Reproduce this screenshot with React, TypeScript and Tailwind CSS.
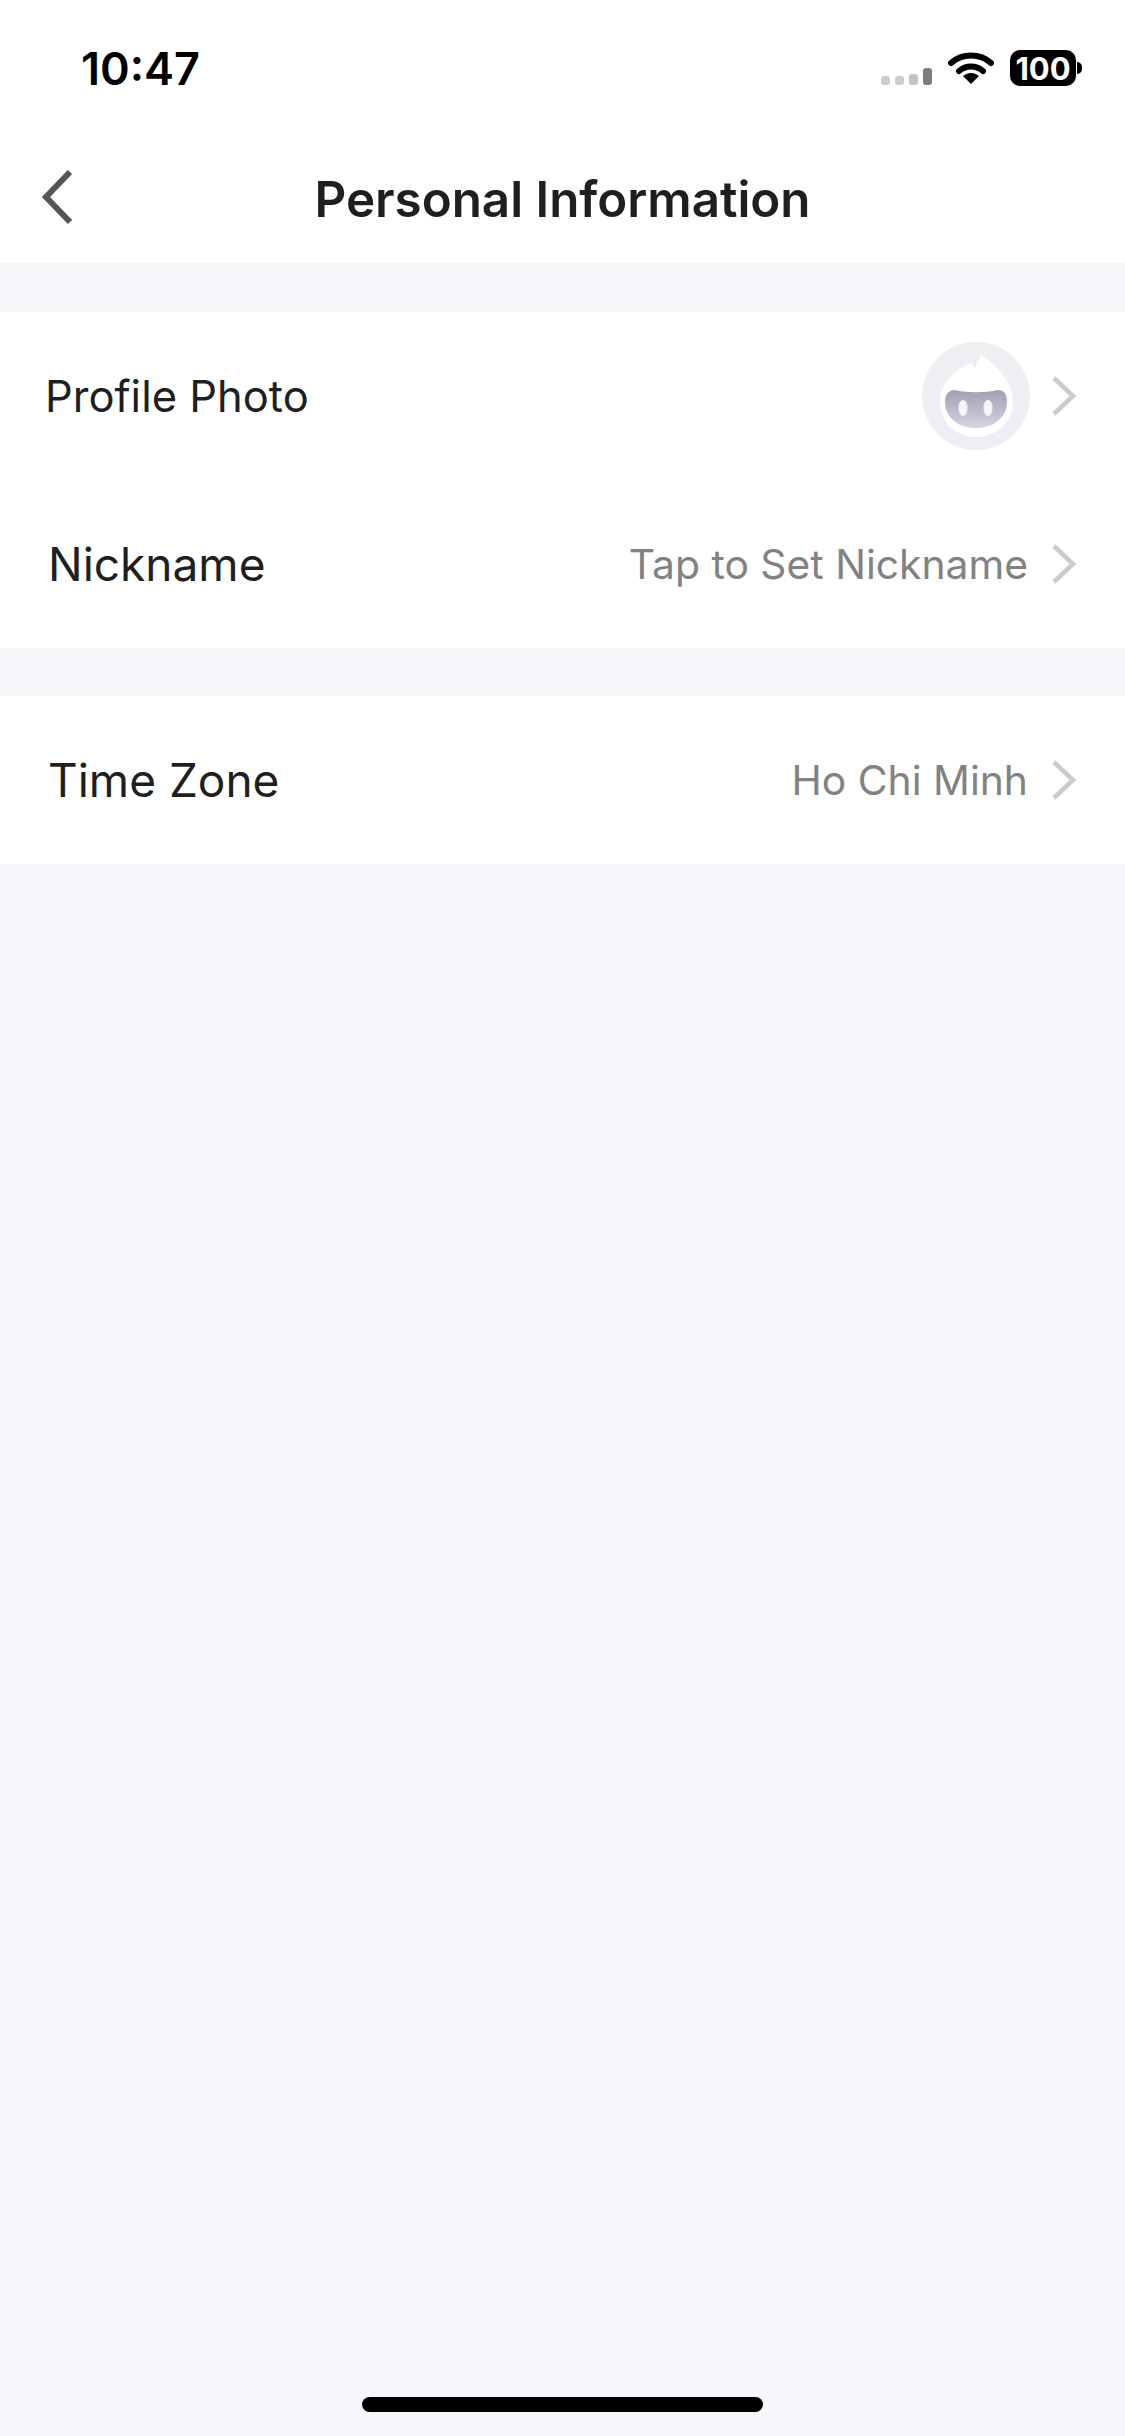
import React from 'react';

const font = { fontFamily: '"Inter", "Noto Sans", sans-serif' };

const Chevron = () => (
  <svg width="26" height="42" viewBox="0 0 26 42" fill="none" className="shrink-0">
    <path d="M3 3 L22 21 L3 39" stroke="#cbcbcb" strokeWidth="4.5" />
  </svg>
);

// 状态栏
const StatusBar = () => (
  <div className="h-[112px] flex items-center justify-between pl-[81px] pr-[49px] pt-[24px]">
    <span className="text-[45px] font-semibold text-black leading-none">10:47</span>
    <div className="flex items-center">
      <svg width="52" height="20" viewBox="0 0 52 20" className="mr-[15px] mt-[20px]">
        <rect x="0" y="8" width="9" height="9" rx="3" fill="#cdcdcd" />
        <rect x="14" y="8" width="9" height="9" rx="3" fill="#cdcdcd" />
        <rect x="28" y="6" width="9" height="11" rx="3" fill="#c4c4c4" />
        <rect x="42" y="0" width="9" height="17" rx="3" fill="#7d7d7d" />
      </svg>
      <svg width="46" height="34" viewBox="0 0 46 34" className="mr-[16px]">
        <path d="M3 12 C14 2 32 2 43 12" stroke="#000" strokeWidth="6" fill="none" strokeLinecap="round" />
        <path d="M11 20 C18 14 28 14 35 20" stroke="#000" strokeWidth="6" fill="none" strokeLinecap="round" />
        <path d="M15 25 C20 21 26 21 31 25 L23 33 Z" fill="#000" />
      </svg>
      <div className="relative w-[66px] h-[36px] rounded-[10px] bg-black flex items-center justify-center">
        <span className="text-[31px] font-bold text-white leading-none">100</span>
        <div className="absolute right-[-6px] top-[12px] w-[5px] h-[12px] rounded-r-[5px] bg-black" />
      </div>
    </div>
  </div>
);

const Avatar = () => (
  <svg width="108" height="108" viewBox="0 0 108 108" className="shrink-0">
    <circle cx="54" cy="54" r="54" fill="#efeff3" />
    <path d="M49 21 L53 26 L59 12 C68 19 91 36 91 60 C91 78 76 95 54 95 C32 95 18 78 18 60 C18 40 35 26 49 21 Z" fill="#fff" />
    <defs>
      <linearGradient id="face" x1="0" y1="0" x2="0" y2="1">
        <stop offset="0" stopColor="#a19fb5" />
        <stop offset="1" stopColor="#d5d4df" />
      </linearGradient>
    </defs>
    <path d="M33 48 C45 51 63 51 76 48 C82 48 85 52 85 60 C85 76 71 86 54 86 C37 86 23 76 23 60 C23 52 27 48 33 48 Z" fill="url(#face)" />
    <ellipse cx="41" cy="66" rx="4.5" ry="8" fill="#f5f5f8" />
    <ellipse cx="66" cy="66" rx="4.5" ry="8" fill="#f5f5f8" />
  </svg>
);

interface RowProps {
  label: string;
  value?: string;
  small?: boolean;
  children?: React.ReactNode;
}

const Row: React.FC<RowProps> = ({ label, value, small, children }) => (
  <div className={`h-[168px] flex items-center justify-between pr-[48px] ${small ? 'pl-[45px]' : 'pl-[48px]'}`}>
    <span className={`${small ? 'text-[43.5px] pt-[1px]' : 'text-[46px]'} text-[#1f1f1f]`}>{label}</span>
    <div className="flex items-center">
      {value && <span className="text-[40.8px] pt-[1px] text-[#828282] mr-[23px]">{value}</span>}
      {children}
      <Chevron />
    </div>
  </div>
);

export default function App() {
  return (
    <div className="w-[1125px] h-[2436px] bg-[#f6f7fb] flex flex-col relative overflow-hidden" style={font}>
      <div className="bg-white h-[263px]">
        <StatusBar />
        <div className="relative h-[151px] flex items-center justify-center pt-[24px]">
          <svg width="34" height="58" viewBox="0 0 34 58" fill="none" className="absolute left-[41px] top-[57px]">
            <path d="M29 3 L5 28 L29 53" stroke="#555" strokeWidth="6" />
          </svg>
          <span className="text-[49.3px] font-semibold text-[#1f1f1f]">Personal Information</span>
        </div>
      </div>
      <div className="mt-[49px] bg-white">
        <Row label="Profile Photo" small>
          <div className="mr-[21px] flex"><Avatar /></div>
        </Row>
        <Row label="Nickname" value="Tap to Set Nickname" />
      </div>
      <div className="mt-[48px] bg-white">
        <Row label="Time Zone" value="Ho Chi Minh" />
      </div>
      <div className="absolute bottom-[24px] left-[362px] w-[401px] h-[15px] rounded-full bg-black" />
    </div>
  );
}
